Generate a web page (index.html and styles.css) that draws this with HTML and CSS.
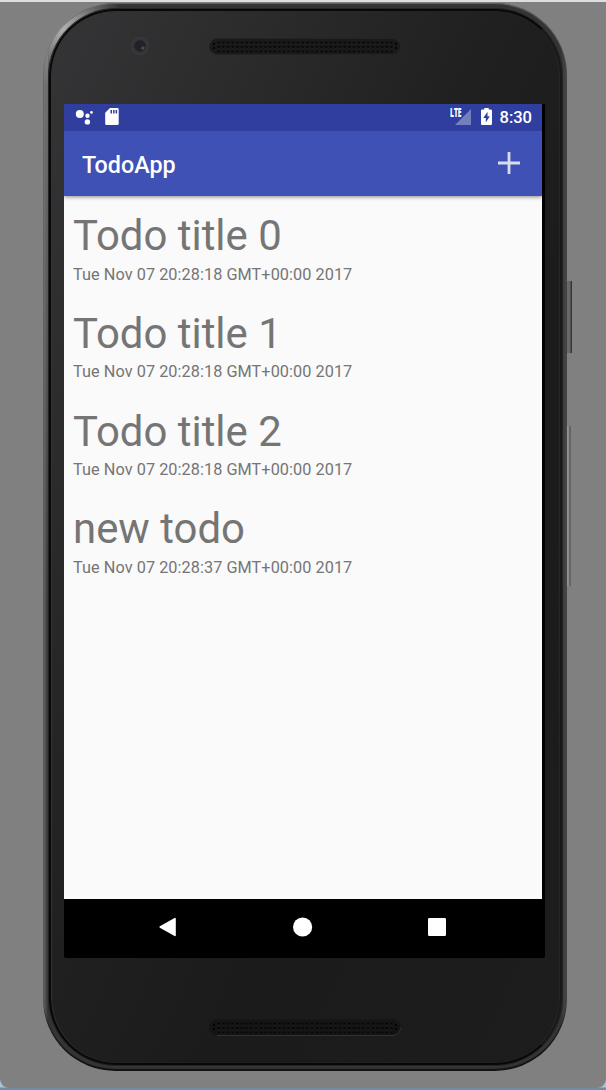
FILE: index.html
```
<!DOCTYPE html>
<html lang="en">
<head>
<meta charset="utf-8">
<title>TodoApp</title>
<link rel="stylesheet" href="styles.css">
</head>
<body>
<div class="window">
  <div class="phone">
    <span class="side-key power"></span>
    <span class="side-key volume"></span>
    <div class="face">
      <div class="forehead">
        <span class="camera"></span>
        <svg class="speaker" width="192" height="17" viewBox="0 0 192 17">
          <defs>
            <pattern id="holes" x="7.35" y="1.85" width="4.667" height="4.5" patternUnits="userSpaceOnUse">
              <rect x="1.3" y="1.2" width="2.2" height="2.2" rx=".7" fill="#030303"/>
              <rect x="1.6" y=".6" width="1.5" height=".6" fill="#303030"/>
            </pattern>
          </defs>
          <rect x=".5" y=".5" width="191" height="16" rx="8" fill="#191919" stroke="#242424"/>
          <rect x="7.35" y="1.85" width="177.3" height="13.5" fill="url(#holes)"/>
          <path d="M4 5h2v2H4zM4 9h2v2H4zM186 5h2v2h-2zM186 9h2v2h-2z" fill="#030303"/>
        </svg>
      </div>
      <div class="display">
        <div class="screen">
          <div class="status">
            <svg class="assistant" width="18" height="18" viewBox="0 0 18 18" fill="#fff"><circle cx="4.8" cy="5.9" r="4"/><circle cx="12.5" cy="7.8" r="2.2"/><circle cx="12.4" cy="13.9" r="2.7"/><circle cx="16.5" cy="4.4" r="1.3"/></svg>
            <svg class="sd" width="14" height="17" viewBox="0 0 14 17"><path d="M5 0h7.400a1.300 1.300 0 0 1 1.300 1.300v14.400a1.300 1.300 0 0 1-1.300 1.300H1.500A1.300 1.300 0 0 1 .2 15.700V4.800z" fill="#fff"/><path d="M5.500 2h1.500v3.500H5.500zM8.100 2h1.500v3.500H8.100zM10.600 2h1.500v3.500h-1.500z" fill="#303f9f"/></svg>
            <span class="spacer"></span>
            <span class="lte">LTE</span>
            <svg class="signal" width="16" height="16" viewBox="0 0 16 16"><path d="M16 0v16H0z" fill="#747fbd"/></svg>
            <svg class="battery" width="11" height="17" viewBox="0 0 11 17"><path d="M3.300 0h4.400v1.600h2.100q1.200 0 1.200 1.200v13q0 1.200-1.200 1.200H1.200Q0 17 0 15.800v-13Q0 1.600 1.200 1.600h2.100z" fill="#fff"/><path d="M6.500 3.700L2.300 10h2.500v4.600L8.800 8.300H6.500z" fill="#303f9f"/></svg>
            <span class="clock">8:30</span>
          </div>
          <div class="appbar">
            <span class="app-title">TodoApp</span>
            <svg class="add" width="22" height="22" viewBox="0 0 22 22"><path d="M9.600 0h2.800v9.600H22v2.800h-9.600V22H9.600v-9.600H0V9.600h9.600z" fill="#d9dcf0"/></svg>
          </div>
          <div class="list">
            <div class="todo"><div class="name">Todo title 0</div><div class="date">Tue Nov 07 20:28:18 GMT+00:00 2017</div></div>
            <div class="todo"><div class="name">Todo title 1</div><div class="date">Tue Nov 07 20:28:18 GMT+00:00 2017</div></div>
            <div class="todo"><div class="name">Todo title 2</div><div class="date">Tue Nov 07 20:28:18 GMT+00:00 2017</div></div>
            <div class="todo"><div class="name">new todo</div><div class="date">Tue Nov 07 20:28:37 GMT+00:00 2017</div></div>
          </div>
        </div>
        <div class="nav">
          <svg width="20" height="20" viewBox="0 0 20 20"><path d="M17 1.600v16.800L2.200 10z" fill="#fff" stroke="#fff" stroke-width="1.600" stroke-linejoin="round"/></svg>
          <svg width="20" height="20" viewBox="0 0 20 20"><circle cx="9.600" cy="10" r="9.600" fill="#fff"/></svg>
          <svg width="20" height="20" viewBox="0 0 20 20"><rect x="1" y="1" width="18" height="18" rx="1.200" fill="#fff"/></svg>
        </div>
      </div>
      <div class="chin">
        <svg class="speaker" width="192" height="17" viewBox="0 0 192 17">
          <rect x=".5" y=".5" width="191" height="16" rx="8" fill="#141414" stroke="#171717"/>
          <path d="M8 16.500h176a7.500 7.500 0 0 0 7.500-8" fill="none" stroke="#303030"/>
          <rect x="7.35" y="1.85" width="177.3" height="13.5" fill="url(#holes)"/>
          <path d="M4 5h2v2H4zM4 9h2v2H4zM186 5h2v2h-2zM186 9h2v2h-2z" fill="#030303"/>
        </svg>
      </div>
    </div>
  </div>
</div>
</body>
</html>
```
FILE: styles.css
```
* { box-sizing: border-box; }
body {
  margin: 0;
  height: 1090px;
  overflow: hidden;
  padding-top: 2px;
  background: linear-gradient(#dcdfdf 0 2px, #a9c5d2 2px, #a9c5d2 1087px, #6f8ba8 1088px);
  font-family: Roboto, sans-serif;
}
.window {
  height: 1086px;
  padding: 1px 0 0 43px;
  background: #808080;
  border-radius: 0 0 9px 9px;
}
.phone {
  position: relative;
  width: 524px;
  height: 1068px;
  padding: 6px 5px 6px 6px;
  border-radius: 72px;
  background:
    radial-gradient(circle at 18px 24px, #b4b4b4 0, #8c8c8c 20px, rgba(80,80,80,0) 62px),
    linear-gradient(rgba(120,118,118,.85) 60px, rgba(120,118,118,0) 600px) 0 0 / 5px 100% no-repeat,
    linear-gradient(90deg, #6b6767 0, #555 2px, #353334 5px, #353334 518px, #4c4849 524px);
  box-shadow: inset 0 1px 1px #686868, inset 0 -2px 1px #111;
}
.face {
  height: 1056px;
  padding-left: 13px;
  border: 2px solid #080808;
  border-right-color: #1a1919;
  border-radius: 67px;
  background: linear-gradient(115deg, #353537 0, #2b2b2c 22%, #202020 45%, #1b1b1b 65%, #1d1d1e 100%);
  box-shadow: inset 1px 0 1px #353535, inset -1px 0 1px #292929, 0 0 0 1px #242424;
}
.forehead { display: flex; align-items: flex-start; height: 93px; padding-top: 25px; padding-left: 66px; }
.camera {
  width: 20px;
  height: 20px;
  border-radius: 50%;
  background: radial-gradient(circle at 13px 12px, #795458 0, #302832 2px, rgba(35,31,40,0) 3px), radial-gradient(circle, #241f29 0 5px, #353535 6.500px, #373737 9px, #2d2d2d 10px);
}
.forehead .speaker { margin: 2px 0 0 59px; }
.display { width: 481px; height: 854px; background: #000; border-radius: 0 0 2px 2px; }
.screen { width: 478px; height: 795px; background: #fafafa; }
.status { display: flex; align-items: flex-start; height: 27px; padding: 4px 10px 0 11px; background: #303f9f; color: #fff; }
.sd { margin: 0 0 0 12px; }
.spacer { flex: 1; }
.lte { margin: -1px -16px 0 0; z-index: 1; width: 21px; font: 800 11.500px/11px "Open Sans", sans-serif; transform: scaleX(.58); transform-origin: left; }
.signal { margin-top: 1px; }
.battery { margin-left: 10px; }
.clock { margin-left: 8px; font-size: 16.500px; font-weight: 500; line-height: 20px; }
.appbar {
  display: flex;
  align-items: center;
  justify-content: space-between;
  height: 65px;
  padding: 0 22px 0 18px;
  background: #3f51b5;
  color: #fff;
  box-shadow: 0 1px 4px rgba(0,0,0,.45);
  clip-path: inset(0 0 -8px 0);
}
.app-title { padding-top: 2px; font-size: 23.300px; font-weight: 500; }
.add { margin-bottom: 1px; }
.list { padding: 15.400px 9px 0; color: #757575; }
.todo { height: 97.660px; }
.name { font-size: 41.900px; line-height: 49px; }
.date { font-size: 16.280px; line-height: 19px; padding-top: 4.200px; letter-spacing: .055px; }
.nav { display: flex; justify-content: space-between; align-items: center; height: 59px; padding: 0 98px 3px 94px; }
.chin { padding: 61px 0 0 145px; }
.speaker, .nav svg, .status svg { display: block; flex: none; }
.side-key { position: absolute; left: 524px; }
.power { top: 278px; width: 5px; height: 72px; background: linear-gradient(90deg, #686868 0 3px, #393535 4px); }
.volume { top: 423px; width: 4px; height: 160px; background: linear-gradient(90deg, #858585 0, #a0a0a0 1px, #777 2px, #555 3px, #747474); }
```
